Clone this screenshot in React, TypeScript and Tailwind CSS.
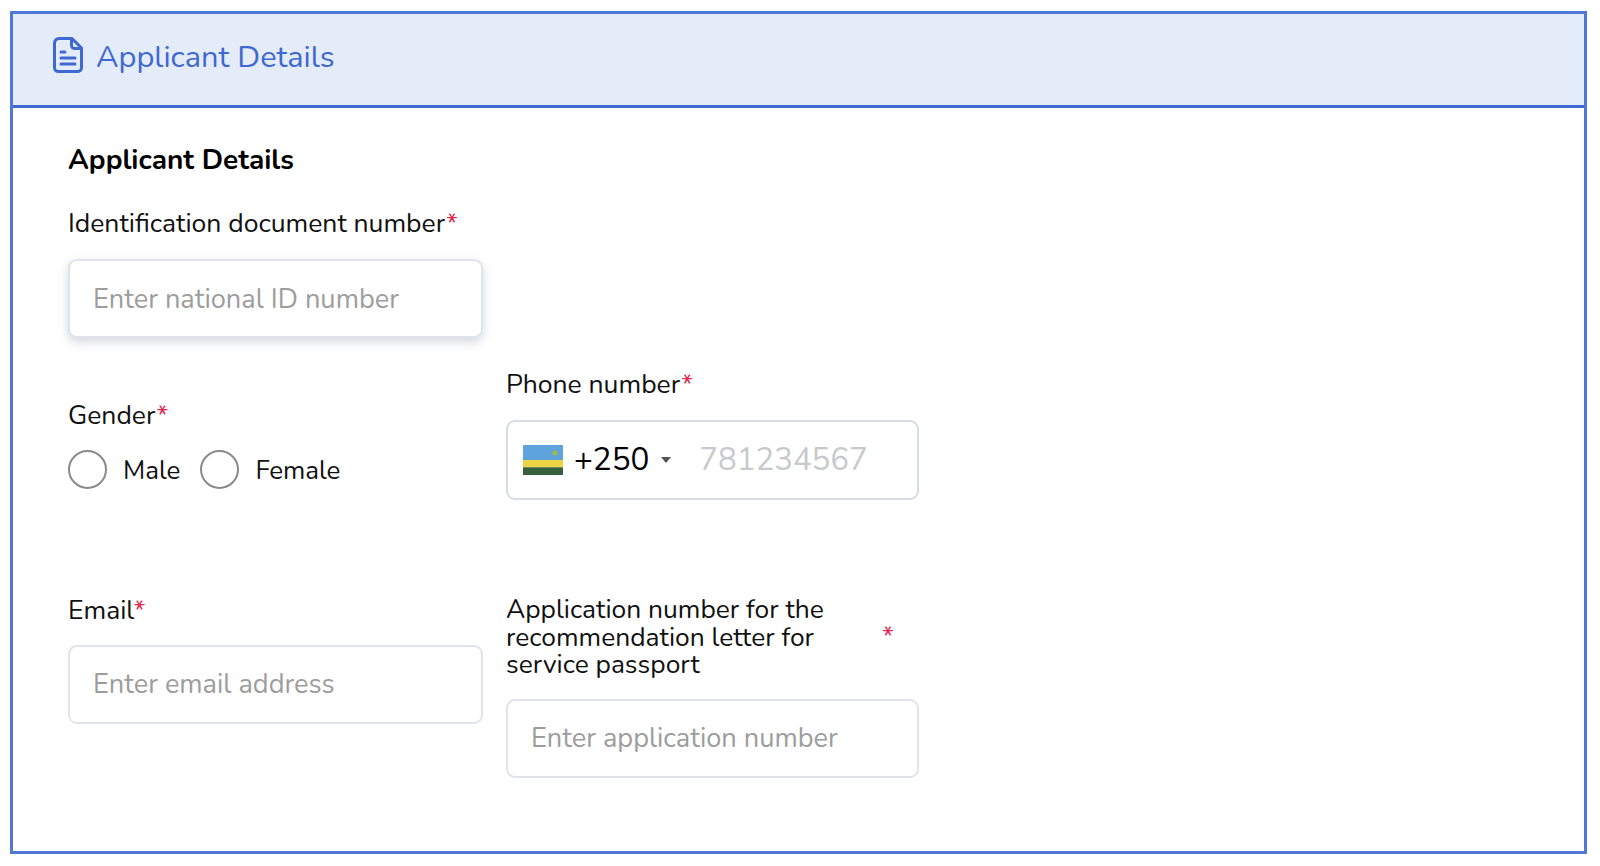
const fieldClass =
  'block w-full h-[79px] rounded-[9px] border-2 border-[#e0e3eb] bg-white px-[23px] text-[27.2px] text-black outline-none placeholder:text-[#9d9d9d]';

function Req() {
  return <span className="text-[#e0274f]">*</span>;
}

function Radio({ label }: { label: string }) {
  return (
    <label className="flex items-center gap-[16px]">
      <span className="w-[39px] h-[39px] -mt-[2px] rounded-full border-2 border-[#8a8a8a] bg-white" />
      <span className="text-[26px]">{label}</span>
    </label>
  );
}

function DocIcon() {
  return (
    <svg width="30" height="36" viewBox="0 0 30 36" fill="none" stroke="currentColor" strokeWidth="3" strokeLinecap="round" strokeLinejoin="round" className="shrink-0 -mt-[4px]">
      <path d="M6 1.5H19L28.5 11V30.5a4 4 0 0 1-4 4H5.500a4 4 0 0 1-4-4V6a4.500 4.500 0 0 1 4.500-4.500Z" />
      <path d="M18.500 2V8.500a3 3 0 0 0 3 3H28" />
      <path d="M8 15H12" />
      <path d="M8 21H22" />
      <path d="M8 27H22" />
    </svg>
  );
}

function RwandaFlag() {
  return (
    <svg width="40" height="30" viewBox="0 0 40 30" className="shrink-0">
      <rect width="40" height="30" rx="1" fill="#5fa3dd" />
      <rect y="15" width="40" height="7.500" fill="#ecd444" />
      <rect y="22.500" width="40" height="7.500" fill="#35603a" />
      <circle cx="32" cy="8" r="2.500" fill="#a9b83f" />
    </svg>
  );
}

export default function App() {
  return (
    <div className="w-[1600px] h-[866px] bg-white pl-[10px] pt-[11px] font-['Nunito','Lato','Noto_Sans',sans-serif] text-[26.5px] text-[#111]">
      <div className="w-[1577px] h-[843px] border-[3px] border-[#4f78d6]">
        <div className="h-[94px] flex items-center pl-[40px] gap-[13px] pb-[5px] bg-[#e4ecfa] border-b-[3px] border-[#3f68d2] text-[#3f68d2]">
          <DocIcon />
          <h1 className="text-[30.8px] font-normal">Applicant Details</h1>
        </div>

        <div className="pl-[55px] pt-[32px]">
          <h2 className="text-[28px] font-bold leading-[40px] text-black">Applicant Details</h2>

          <div className="mt-[25px] w-[415px]">
            <div className="leading-[36px]">Identification document number<Req /></div>
            <input
              className={fieldClass + ' mt-[18px] pt-[1px] shadow-[0_4px_10px_rgba(90,100,130,0.25)]'}
              placeholder="Enter national ID number"
            />
          </div>

          <div className="mt-[28px] grid grid-cols-[415px_413px] gap-x-[23px]">
            <div className="pt-[31px]">
              <div className="leading-[36px]">Gender<Req /></div>
              <div className="mt-[18px] flex gap-[20px]">
                <Radio label="Male" />
                <Radio label="Female" />
              </div>
            </div>
            <div>
              <div className="leading-[36px]">Phone number<Req /></div>
              <div className="mt-[18px] h-[80px] rounded-[9px] border-2 border-[#d8dce6] flex items-center pl-[15px]">
                <RwandaFlag />
                <span className="ml-[11px] text-[31.4px] text-black">+250</span>
                <span className="ml-[12px] w-0 h-0 border-x-[5px] border-x-transparent border-t-[6px] border-t-[#555]" />
                <span className="ml-[28px] text-[31.2px] text-[#c6cacd]">781234567</span>
              </div>
            </div>
          </div>

          <div className="mt-[92px] grid grid-cols-[415px_413px] gap-x-[23px]">
            <div>
              <div className="leading-[36px]">Email<Req /></div>
              <input className={fieldClass + ' mt-[17px]'} placeholder="Enter email address" />
            </div>
            <div className="pt-[4px]">
              <div className="flex text-[26.4px] leading-[27.5px]">
                <div className="w-[376px]">Application number for the<br />recommendation letter for<br />service passport</div>
                <div className="self-center -mt-[2px]"><Req /></div>
              </div>
              <input className={fieldClass + ' mt-[20px]'} placeholder="Enter application number" />
            </div>
          </div>
        </div>
      </div>
    </div>
  );
}
